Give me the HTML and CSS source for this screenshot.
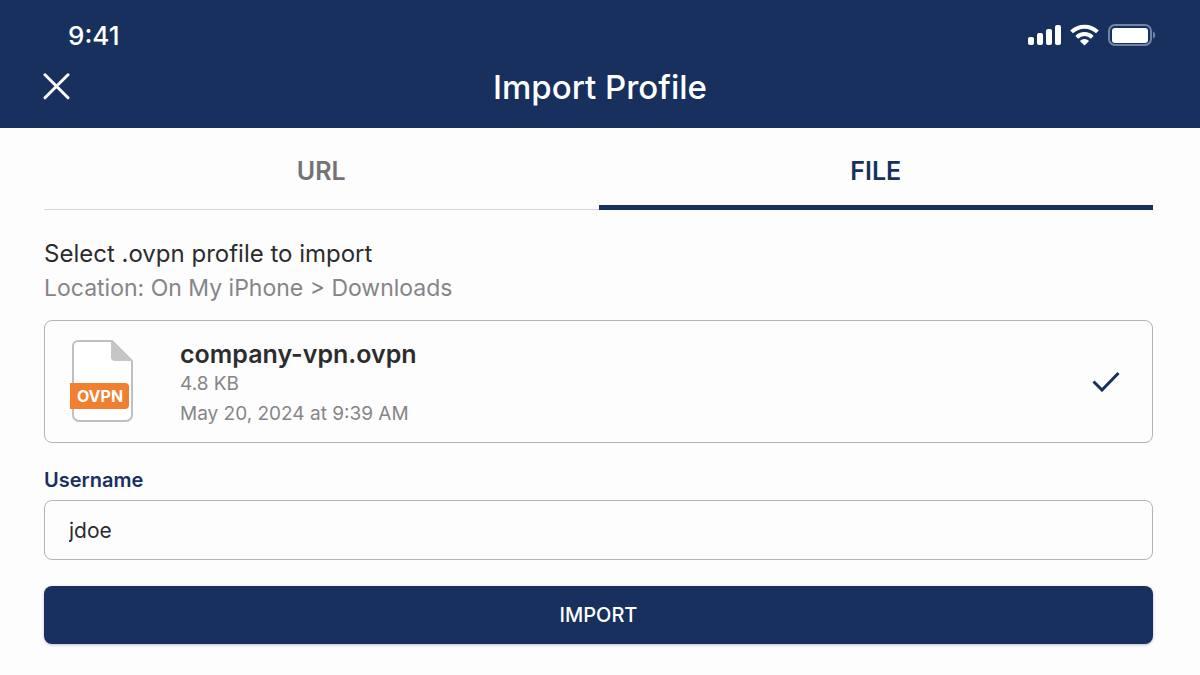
FILE: index.html
```
<!DOCTYPE html>
<html lang="en">
<head>
  <meta charset="UTF-8">
  <meta name="viewport" content="width=device-width, initial-scale=1.0">
  <title>Import Profile</title>
  <link rel="stylesheet" href="styles.css">
</head>
<body>
  <header class="header">
    <div class="status-bar">
      <span class="time">9:41</span>
      <div class="status-icons">
        <svg width="34" height="22" viewBox="0 0 34 22" fill="#fff" aria-hidden="true">
          <rect x="0" y="13" width="6" height="8" rx="2"/>
          <rect x="9" y="9" width="6" height="12" rx="2"/>
          <rect x="18" y="5" width="6" height="16" rx="2"/>
          <rect x="27" y="1" width="6" height="20" rx="2"/>
        </svg>
        <svg width="30" height="22" viewBox="0 0 30 22" aria-hidden="true">
          <g fill="none" stroke="#fff" stroke-width="4">
            <path d="M1.600 7.900a18.500 18.500 0 0 1 25.800 0"/>
            <path d="M6.800 13.300a10.900 10.900 0 0 1 15.400 0"/>
          </g>
          <path d="M14.500 21.500l-4.600-4.500a6.500 6.500 0 0 1 9.200 0z" fill="#fff"/>
        </svg>
        <svg width="48" height="22" viewBox="0 0 48 22" aria-hidden="true">
          <rect x="1" y="1" width="42" height="20" rx="6" fill="none" stroke="#7184a6" stroke-width="2"/>
          <rect x="4" y="4" width="36" height="15" rx="3" fill="#fff"/>
          <path d="M45 7.500c3 1 3 6 0 7z" fill="#7184a6"/>
        </svg>
      </div>
    </div>
    <div class="nav-bar">
      <button class="close" type="button" aria-label="Close">
        <svg width="28" height="28" viewBox="0 0 28 28" fill="none" stroke="#fff" stroke-width="3" stroke-linecap="round">
          <path d="M3 1.800l23 23M26 1.800l-23 23"/>
        </svg>
      </button>
      <h1 class="title">Import Profile</h1>
    </div>
  </header>

  <main class="content">
    <div class="tabs" role="tablist">
      <button class="tab" type="button" role="tab" aria-selected="false">URL</button>
      <button class="tab active" type="button" role="tab" aria-selected="true">FILE</button>
    </div>

    <div class="intro">
      <p class="prompt">Select .ovpn profile to import</p>
      <p class="location">Location: On My iPhone &gt; Downloads</p>
    </div>

    <button class="file-card" type="button" aria-pressed="true">
      <svg class="file-icon" width="64" height="84" viewBox="0 0 64 84" aria-hidden="true">
        <path d="M8 2h34l20 20v54a6 6 0 0 1-6 6H9a6 6 0 0 1-6-6V7a5 5 0 0 1 5-5z" fill="#fff" stroke="#c0c0c1" stroke-width="2"/>
        <path d="M41 1.500l21 20.500H45a4 4 0 0 1-4-4z" fill="#c6c6c7"/>
        <path d="M0 44h55a4 4 0 0 1 4 4v18a4 4 0 0 1-4 4H0z" fill="#f08030"/>
        <text class="file-type" x="30" y="63" text-anchor="middle">OVPN</text>
      </svg>
      <span class="file-info">
        <span class="file-name">company-vpn.ovpn</span>
        <span class="file-meta">4.8 KB</span>
        <span class="file-meta">May 20, 2024 at 9:39 AM</span>
      </span>
      <svg width="28" height="22" viewBox="0 0 28 22" fill="none" stroke="#17305e" stroke-width="3" aria-hidden="true">
        <path d="M1.500 11.500l8.500 8.500L26.500 3"/>
      </svg>
    </button>

    <form class="import-form">
      <label class="label" for="username">Username</label>
      <input class="input" id="username" type="text" value="jdoe">
      <button class="import-button" type="submit">IMPORT</button>
    </form>
  </main>
</body>
</html>
```

FILE: styles.css
```
* {
    box-sizing: border-box;
}
body {
    margin: 0;
    background: #fdfdfd;
    color: #2c2c2e;
    font-family: Inter, "Liberation Sans", sans-serif;
}
button,
input {
    font-family: inherit;
    margin: 0;
}
button {
    cursor: pointer;
}
.header {
    background: #17305e;
    color: #fff;
    padding: 19px 42px 16px;
}
.status-bar {
    display: flex;
    justify-content: space-between;
    align-items: center;
    height: 32px;
    padding: 0 2px 0 26px;
}
.time {
    font-size: 26px;
    font-weight: 500;
}
.status-icons {
    display: flex;
    gap: 8px;
}
.nav-bar {
    display: grid;
    grid-template-columns: 28px 1fr 28px;
    align-items: center;
    height: 61px;
    padding-top: 11px;
}
.close {
    display: flex;
    padding: 0;
    border: none;
    background: none;
}
.title {
    margin: 0;
    font-size: 33px;
    font-weight: 500;
    text-align: center;
}
.content {
    padding: 0 47px 24px 44px;
}
.tabs {
    display: flex;
    height: 82px;
}
.tab {
    flex: 1;
    padding: 5px 0 0;
    border: none;
    border-bottom: 1px solid #d4d4d6;
    background: none;
    color: #737375;
    font-size: 25px;
    font-weight: 600;
}
.tab.active {
    padding-top: 9px;
    border-bottom: 5px solid #17305e;
    color: #17305e;
}
.intro {
    padding: 27px 0 15px;
}
.intro p {
    margin: 0;
    line-height: 34px;
}
.prompt {
    font-size: 24px;
}
.location {
    color: #858587;
    font-size: 23px;
}
.file-card {
    display: flex;
    align-items: center;
    width: 100%;
    padding: 12px 32px 13px 25px;
    border: 1px solid #b4b4b6;
    border-radius: 8px;
    background: none;
    color: inherit;
    text-align: left;
}
.file-type {
    fill: #fff;
    font-size: 16px;
    font-weight: 700;
}
.file-info {
    display: flex;
    flex: 1;
    flex-direction: column;
    margin-left: 46px;
    padding-top: 6px;
    line-height: 30px;
}
.file-name {
    font-size: 25px;
    font-weight: 600;
}
.file-meta {
    color: #858587;
    font-size: 19px;
}
.import-form {
    display: flex;
    flex-direction: column;
    padding-top: 24px;
}
.label {
    margin-bottom: 6px;
    color: #17305e;
    font-size: 20px;
    font-weight: 600;
    line-height: 27px;
}
.input {
    height: 60px;
    padding: 0 24px;
    border: 1px solid #b4b4b6;
    border-radius: 8px;
    background: none;
    color: inherit;
    font-size: 21px;
}
.import-button {
    height: 58px;
    margin-top: 26px;
    border: none;
    border-radius: 8px;
    background: #17305e;
    box-shadow: 0 1px 3px rgba(23, 48, 94, 0.3);
    color: #fff;
    font-size: 20px;
    font-weight: 500;
}
```
